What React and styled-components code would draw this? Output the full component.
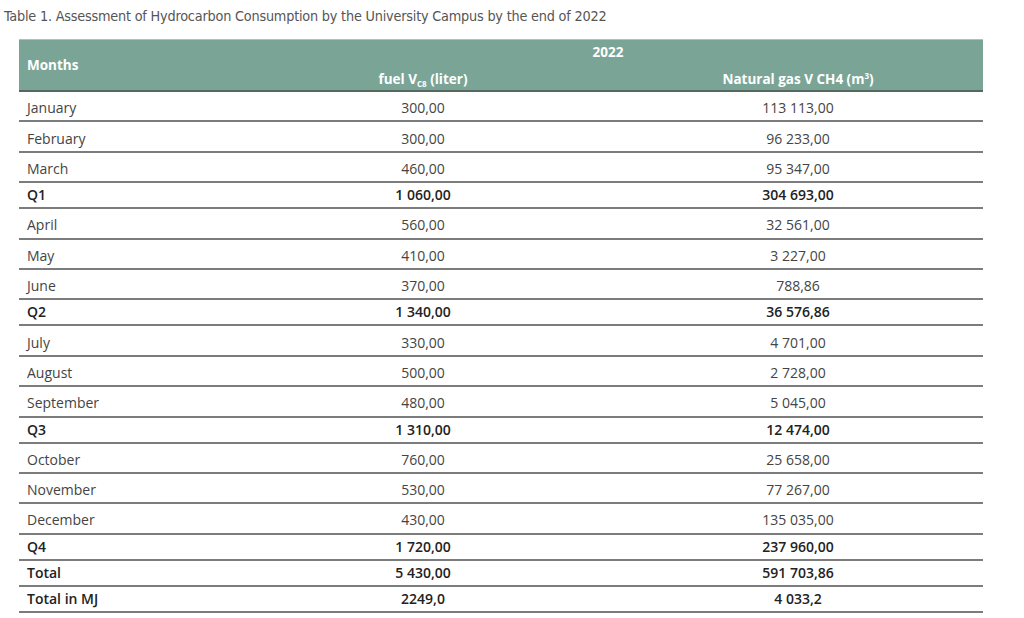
import React from 'react'
import styled, { createGlobalStyle } from 'styled-components'

const GlobalStyle = createGlobalStyle`
    html, body {
        margin: 0;
        padding: 0;
        background: #ffffff;
    }
    body {
        font-family: 'Open Sans', 'Liberation Sans', sans-serif;
        color: #333333;
    }
`

const Page = styled.div`
    width: 1024px;
    height: 618px;
    padding: 6px 0 0 4px;
    box-sizing: border-box;
`

const Caption = styled.h2`
    margin: 0 0 13px;
    font-family: 'DejaVu Sans Condensed', 'Liberation Sans', sans-serif;
    font-size: 14.3px;
    font-weight: normal;
    color: #555555;
    letter-spacing: -0.2px;
    line-height: 20px;
`

const Table = styled.table`
    margin-left: 15px;
    width: 964px;
    border-collapse: collapse;
    table-layout: fixed;
    font-size: 14px;
`

const HeadCell = styled.th`
    background: #7aa596;
    color: #ffffff;
    font-weight: 700;
    font-size: 13.5px;
    text-align: ${({ $left }) => ($left ? 'left' : 'center')};
    padding: ${({ $left }) => ($left ? '0 0 0 8px' : '0')};
    height: ${({ $top }) => ($top ? '24px' : '26px')};
    vertical-align: ${({ $top }) => ($top ? 'top' : 'bottom')};
    line-height: ${({ $top }) => ($top ? '24px' : '22px')};
    border-top: ${({ $top }) => ($top ? '1px solid #a7c6ba' : 'none')};
    border-bottom: ${({ $top }) => ($top ? 'none' : '2px solid #56675f')};

    &.months {
        vertical-align: middle;
        border-top: 1px solid #a7c6ba;
        border-bottom: 2px solid #56675f;
    }

    sub {
        font-size: 8px;
        vertical-align: -3px;
        line-height: 0;
    }

    sup {
        font-size: 8px;
        vertical-align: 5px;
        line-height: 0;
    }
`

const Row = styled.tr`
    height: ${({ $bold }) => ($bold ? '26px' : '30.4px')};
`

const Cell = styled.td`
    border-bottom: 2px solid #7c7c7c;
    padding: ${({ $left, $bold }) =>
        `${$bold ? 0 : 4}px 0 0 ${$left ? 8 : 0}px`};
    text-align: ${({ $left }) => ($left ? 'left' : 'center')};
    font-weight: ${({ $bold }) => ($bold ? 600 : 400)};
    color: ${({ $bold }) => ($bold ? '#222222' : '#444444')};
    vertical-align: middle;
    white-space: nowrap;
    line-height: 18px;
`

const rows = [
    ['January', '300,00', '113 113,00'],
    ['February', '300,00', '96 233,00'],
    ['March', '460,00', '95 347,00'],
    ['Q1', '1 060,00', '304 693,00', true],
    ['April', '560,00', '32 561,00'],
    ['May', '410,00', '3 227,00'],
    ['June', '370,00', '788,86'],
    ['Q2', '1 340,00', '36 576,86', true],
    ['July', '330,00', '4 701,00'],
    ['August', '500,00', '2 728,00'],
    ['September', '480,00', '5 045,00'],
    ['Q3', '1 310,00', '12 474,00', true],
    ['October', '760,00', '25 658,00'],
    ['November', '530,00', '77 267,00'],
    ['December', '430,00', '135 035,00'],
    ['Q4', '1 720,00', '237 960,00', true],
    ['Total', '5 430,00', '591 703,86', true],
    ['Total in MJ', '2249,0', '4 033,2', true],
]

const App = () => {
    return (
        <Page>
            <GlobalStyle />
            <Caption>
                Table 1. Assessment of Hydrocarbon Consumption by the University
                Campus by the end of 2022
            </Caption>
            <Table>
                <colgroup>
                    <col style={{ width: '214px' }} />
                    <col style={{ width: '380px' }} />
                    <col style={{ width: '370px' }} />
                </colgroup>
                <thead>
                    <tr>
                        <HeadCell className="months" rowSpan={2} $left>
                            Months
                        </HeadCell>
                        <HeadCell colSpan={2} $top>
                            2022
                        </HeadCell>
                    </tr>
                    <tr>
                        <HeadCell>
                            fuel V<sub>C8</sub> (liter)
                        </HeadCell>
                        <HeadCell>
                            Natural gas V CH4 (m<sup>3</sup>)
                        </HeadCell>
                    </tr>
                </thead>
                <tbody>
                    {rows.map(([month, fuel, gas, bold]) => (
                        <Row key={month} $bold={bold}>
                            <Cell $left $bold={bold}>
                                {month}
                            </Cell>
                            <Cell $bold={bold}>{fuel}</Cell>
                            <Cell $bold={bold}>{gas}</Cell>
                        </Row>
                    ))}
                </tbody>
            </Table>
        </Page>
    )
}

export default App
